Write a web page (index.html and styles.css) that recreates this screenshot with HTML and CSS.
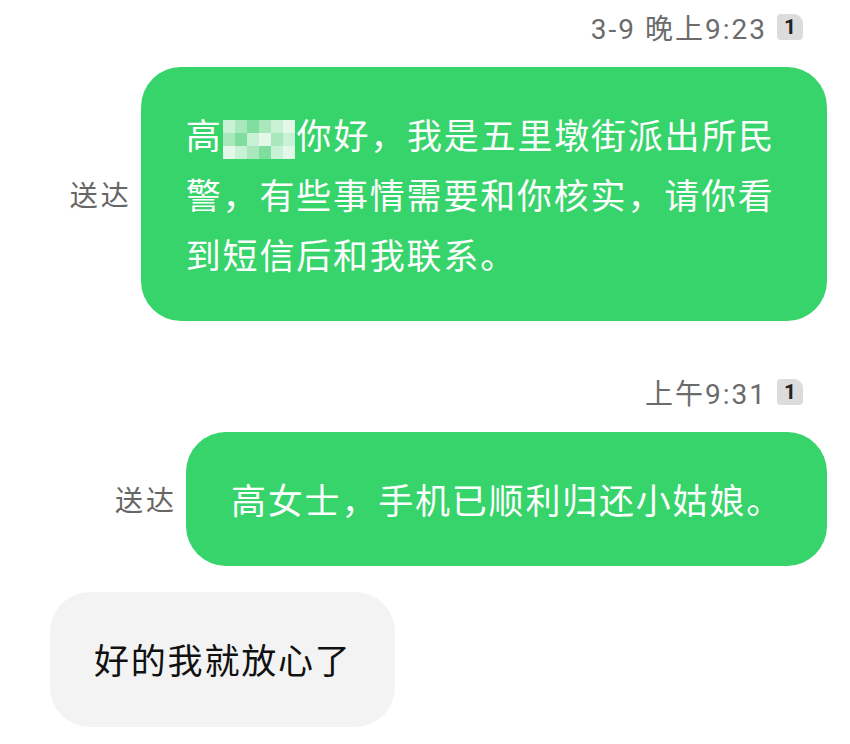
FILE: index.html
```html
<!DOCTYPE html>
<html lang="zh-CN">
<head>
  <meta charset="UTF-8">
  <title>短信</title>
  <link rel="stylesheet" href="styles.css">
</head>
<body>
  <div class="chat">
    <div class="time">
      <span>3-9 晚上9:23</span>
      <span class="sim">1</span>
    </div>
    <div class="row out">
      <span class="status">送达</span>
      <div class="bubble green long">
        高<span class="mosaic" aria-hidden="true">
          <i class="m2"></i><i class="m1"></i><i class="m3"></i><i class="m1"></i><i class="m2"></i><i class="m4"></i>
          <i class="m1"></i><i class="m3"></i><i class="m2"></i><i class="m4"></i><i class="m1"></i><i class="m2"></i>
          <i class="m4"></i><i class="m2"></i><i class="m1"></i><i class="m3"></i><i class="m2"></i><i class="m4"></i>
        </span>你好，我是五里墩街派出所民<br>警，有些事情需要和你核实，请你看<br>到短信后和我联系。
      </div>
    </div>

    <div class="time second">
      <span>上午9:31</span>
      <span class="sim">1</span>
    </div>
    <div class="row out">
      <span class="status">送达</span>
      <div class="bubble green">高女士，手机已顺利归还小姑娘。</div>
    </div>

    <div class="row in">
      <div class="bubble grey">好的我就放心了</div>
    </div>
  </div>
</body>
</html>
```

FILE: styles.css
```css
body {
  margin: 0;
  background: #fff;
  font-family: "Noto Sans CJK SC", "Noto Sans", sans-serif;
  color: #111;
}

.chat {
  padding: 13px 23px 0 50px;
}

.time {
  display: flex;
  justify-content: flex-end;
  align-items: center;
  gap: 10px;
  height: 34px;
  font-family: Roboto, "Noto Sans CJK SC", sans-serif;
  font-size: 28px;
  letter-spacing: 2px;
  color: #6b6b6b;
  margin-top: -3px;
  margin-right: 24px;
  margin-bottom: 23px;
}

.time.second {
  margin-top: 54px;
}

.sim {
  flex: none;
  width: 26px;
  height: 26px;
  background: #dcdcdc;
  border-radius: 4px 9px 4px 4px;
  color: #222;
  font-size: 21px;
  font-weight: 700;
  letter-spacing: 0;
  display: flex;
  align-items: center;
  justify-content: center;
}

.row {
  display: flex;
  align-items: center;
  gap: 12px;
}

.row.out {
  justify-content: flex-end;
}

.row.in {
  margin-top: 26px;
}

.status {
  font-size: 28px;
  letter-spacing: 3px;
  color: #666;
  margin-right: -3px;
}

.bubble {
  font-size: 35px;
  line-height: 60px;
  letter-spacing: 1.8px;
  border-radius: 40px;
  padding: 37px 44px 37px 45px;
}

.bubble.long {
  padding-right: 52px;
}

.green {
  background: #37d36b;
  color: #fff;
}

.grey {
  background: #f3f3f3;
  color: #111;
  padding: 37px 43px 38px 44px;
}

.mosaic {
  display: inline-grid;
  grid-template-columns: repeat(6, 12px);
  grid-template-rows: repeat(3, 13px);
  width: 72px;
  height: 39px;
  vertical-align: middle;
  margin: -10px 2px -10px 0;
}

.mosaic i {
  display: block;
}

.m1 { background: #a9e8bd; }
.m2 { background: #c8f1d5; }
.m3 { background: #7fdd9d; }
.m4 { background: #e4f8ea; }
```
